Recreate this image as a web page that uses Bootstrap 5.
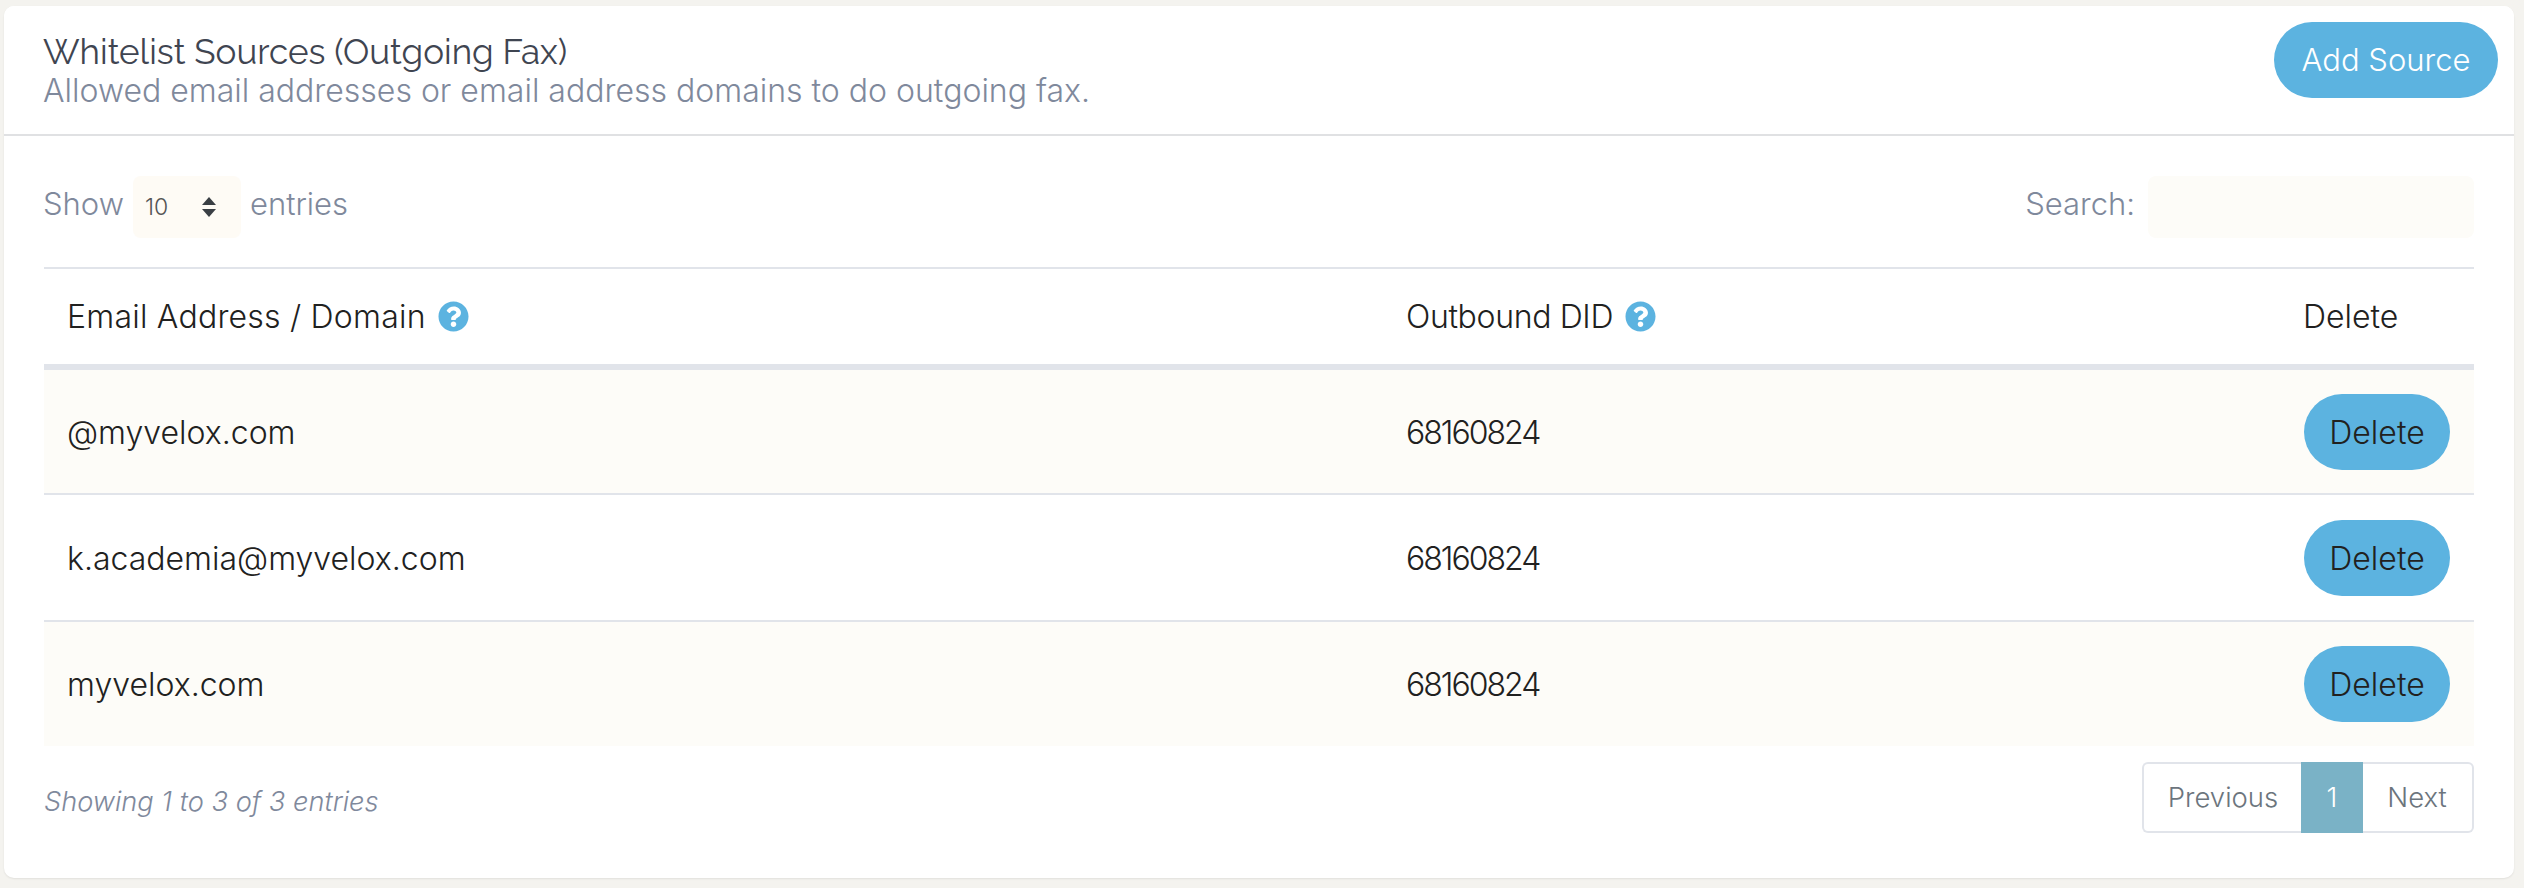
<!DOCTYPE html>
<html lang="en"><head><meta charset="utf-8"><title>Whitelist Sources</title>
<link href="https://cdn.jsdelivr.net/npm/bootstrap@5.3.0/dist/css/bootstrap.min.css" rel="stylesheet">
<style>
html,body{height:100%}
body{background:#f4f3ef;font-family:Inter,"Liberation Sans",sans-serif;font-weight:300;color:#212120;padding:6px 10px 10px 4px;font-size:32px;overflow:hidden}
.wl-card{height:872px;border:0;border-radius:10px;box-shadow:0 1px 2px rgba(0,0,0,.08);background:#fff}
.wl-head{height:130px;padding:16px 16px 0 39px;background:#fff;border-bottom:2px solid #e0e1e3;border-radius:10px 10px 0 0!important}
.wl-title{font-family:Raleway,Lato,sans-serif;font-size:35px;line-height:38px;color:#3f4551;margin:11px 0 0;font-weight:400}
.wl-sub{font-size:32px;line-height:38px;margin-top:1px;color:#7f899c}
.wl-add{background:#5cb3e0;border:0;color:#fff;font-size:31px;font-weight:300;width:224px;height:76px;border-radius:38px;padding:0}
.wl-body{padding:40px 40px 0 40px}
.wl-tools{height:91px;color:#7f899c;align-items:flex-start;font-size:31px}
.wl-tools label{display:flex;align-items:center;gap:9px;height:62px;margin:0}
.wl-tools label span{margin-top:-6px}
.wl-tools label span:first-child{margin-left:-1px}
.wl-sel{width:108px;height:62px;border:0;border-radius:8px;background-color:#fefbf5;padding:0 0 0 12px;font-size:23px;font-weight:300;color:#555;background-position:right 24px center;background-size:16px 20px;background-image:url("data:image/svg+xml,%3Csvg xmlns='http://www.w3.org/2000/svg' viewBox='0 0 16 20'%3E%3Cpath fill='%233a3f44' d='M8 0l7 8H1zM8 20L1 12h14z'/%3E%3C/svg%3E");font-family:Inter,sans-serif}
.wl-find{width:326px;height:62px;border:0;border-radius:8px;background:#fdfcf8;margin-left:4px}
.wl-table{--bs-table-striped-bg:#fdfcf8;--bs-table-striped-color:#212120;margin:0;table-layout:fixed;width:2430px;border-top:2px solid #e1e4ea}
.wl-table th,.wl-table td{padding:0 24px 0 23px;vertical-align:middle;font-weight:300;color:#212120;border-color:#e1e4ea;border-bottom-width:2px}
.wl-table tbody td{padding-top:2px}
.wl-table thead th{height:99px;border-bottom-width:6px}
.wl-table thead th:first-child{letter-spacing:.22px}
.wl-table thead th:nth-child(2){letter-spacing:-.35px}
.wl-table tbody td{height:127px}
.wl-table tbody tr:last-child td{border-bottom:0;height:125px}
.wl-table tbody td:last-child{padding:0 24px}
.wl-c1{width:1339px}.wl-c2{width:897px}.wl-c3{width:194px}
.wl-did{letter-spacing:-2px}
.wl-help{width:31px;height:31px;fill:#5cb3e0;vertical-align:-4px;margin-left:3px}
.wl-del{background:#5cb3e0;border:0;color:#212120;font-size:32px;font-weight:300;width:146px;height:76px;border-radius:38px;padding:2px 0 0}
.wl-foot{margin-top:16px}
.wl-info{color:#7f899c;font-style:italic;font-size:27.2px;margin-top:20px}
.wl-pager{margin:0;height:71px}
.wl-pager .page-link{height:71px;display:flex;align-items:center;justify-content:center;color:#6c757d;font-size:27.5px;border:2px solid #e1e4ea;padding:0;background:#fff}
.wl-pager .wl-p{width:160px;border-right:0;border-radius:8px 0 0 8px}
.wl-pager .wl-n{width:112px;border-left:0;border-radius:0 8px 8px 0}
.wl-pager .active .page-link{width:62px;background:#7ab2c6;border:0;color:#fff;border-radius:0}
</style></head>
<body>
<div class="card wl-card">
 <div class="card-header wl-head d-flex justify-content-between align-items-start">
  <div><h5 class="wl-title">Whitelist Sources (Outgoing Fax)</h5><div class="wl-sub">Allowed email addresses or email address domains to do outgoing fax.</div></div>
  <button class="btn wl-add" type="button">Add Source</button>
 </div>
 <div class="card-body wl-body">
  <div class="d-flex justify-content-between wl-tools">
   <label><span>Show</span> <select class="form-select wl-sel"><option>10</option></select> <span>entries</span></label>
   <label><span>Search:</span> <input class="form-control wl-find" type="search"></label>
  </div>
  <table class="table table-striped wl-table">
   <colgroup><col class="wl-c1"><col class="wl-c2"><col class="wl-c3"></colgroup>
   <thead><tr>
    <th>Email Address / Domain <svg class="wl-help" viewBox="0 0 512 512"><path d="M504 256c0 136.997-111.043 248-248 248S8 392.997 8 256C8 119.083 119.043 8 256 8s248 111.083 248 248zM262.655 90c-54.497 0-89.255 22.957-116.549 63.758-3.536 5.286-2.353 12.415 2.715 16.258l34.699 26.31c5.205 3.947 12.621 3.008 16.665-2.122 17.864-22.658 30.113-35.797 57.303-35.797 20.429 0 45.698 13.148 45.698 32.958 0 14.976-12.363 22.667-32.534 33.976C247.128 238.528 216 254.941 216 296v4c0 6.627 5.373 12 12 12h56c6.627 0 12-5.373 12-12v-1.333c0-28.462 83.186-29.647 83.186-106.667 0-58.002-60.165-102-116.531-102zM256 338c-25.365 0-46 20.635-46 46 0 25.364 20.635 46 46 46s46-20.636 46-46c0-25.365-20.635-46-46-46z"/></svg></th>
    <th>Outbound DID <svg class="wl-help" viewBox="0 0 512 512"><path d="M504 256c0 136.997-111.043 248-248 248S8 392.997 8 256C8 119.083 119.043 8 256 8s248 111.083 248 248zM262.655 90c-54.497 0-89.255 22.957-116.549 63.758-3.536 5.286-2.353 12.415 2.715 16.258l34.699 26.31c5.205 3.947 12.621 3.008 16.665-2.122 17.864-22.658 30.113-35.797 57.303-35.797 20.429 0 45.698 13.148 45.698 32.958 0 14.976-12.363 22.667-32.534 33.976C247.128 238.528 216 254.941 216 296v4c0 6.627 5.373 12 12 12h56c6.627 0 12-5.373 12-12v-1.333c0-28.462 83.186-29.647 83.186-106.667 0-58.002-60.165-102-116.531-102zM256 338c-25.365 0-46 20.635-46 46 0 25.364 20.635 46 46 46s46-20.636 46-46c0-25.365-20.635-46-46-46z"/></svg></th>
    <th>Delete</th>
   </tr></thead>
   <tbody>
    <tr><td>@myvelox.com</td><td class="wl-did">68160824</td><td><button class="btn wl-del" type="button">Delete</button></td></tr>
    <tr><td>k.academia@myvelox.com</td><td class="wl-did">68160824</td><td><button class="btn wl-del" type="button">Delete</button></td></tr>
    <tr><td>myvelox.com</td><td class="wl-did">68160824</td><td><button class="btn wl-del" type="button">Delete</button></td></tr>
   </tbody>
  </table>
  <div class="d-flex justify-content-between wl-foot">
   <div class="wl-info">Showing 1 to 3 of 3 entries</div>
   <ul class="pagination wl-pager">
    <li class="page-item"><a class="page-link wl-p" href="#">Previous</a></li>
    <li class="page-item active"><a class="page-link" href="#">1</a></li>
    <li class="page-item"><a class="page-link wl-n" href="#">Next</a></li>
   </ul>
  </div>
 </div>
</div>
<script src="https://cdn.jsdelivr.net/npm/bootstrap@5.3.0/dist/js/bootstrap.bundle.min.js"></script>
</body></html>
